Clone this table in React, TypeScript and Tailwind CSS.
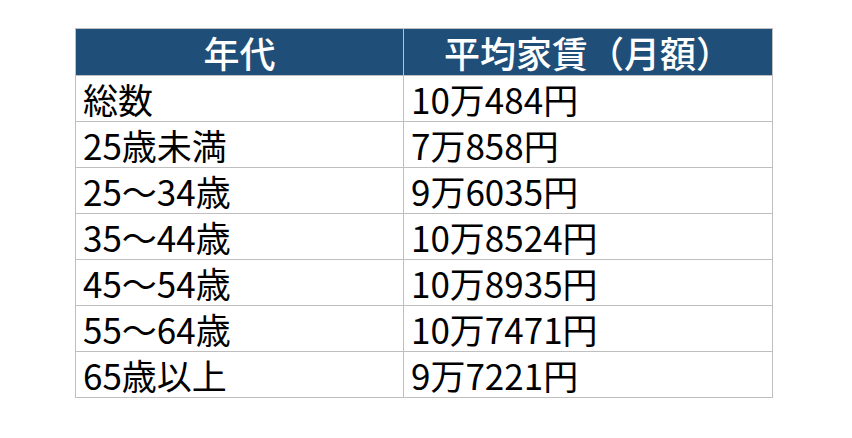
const rows: [string, string][] = [
  ['総数', '10万484円'],
  ['25歳未満', '7万858円'],
  ['25～34歳', '9万6035円'],
  ['35～44歳', '10万8524円'],
  ['45～54歳', '10万8935円'],
  ['55～64歳', '10万7471円'],
  ['65歳以上', '9万7221円'],
];

export default function App() {
  return (
    <div
      className="w-[852px] h-[438px] bg-white pt-[28px] pl-[75px]"
      style={{ fontFamily: '"Noto Sans CJK JP", "Noto Sans", sans-serif' }}
    >
      <div className="w-[698px] border border-[#bfbfbf]">
        <div className="grid grid-cols-[328px_1fr] h-[46px] bg-[#1f4e79] text-white text-[36px] font-medium leading-none">
          <div className="flex items-center justify-center border-r border-[#bfbfbf]">年代</div>
          <div className="flex items-center justify-center">平均家賃（月額）</div>
        </div>
        {rows.map(([age, rent]) => (
          <div
            key={age}
            className="grid grid-cols-[328px_1fr] h-[46px] border-t border-[#bfbfbf] text-[35px] text-black leading-none"
          >
            <div className="flex items-center pl-[7px] border-r border-[#bfbfbf]">{age}</div>
            <div className="flex items-center pl-[7px]">{rent}</div>
          </div>
        ))}
      </div>
    </div>
  );
}
